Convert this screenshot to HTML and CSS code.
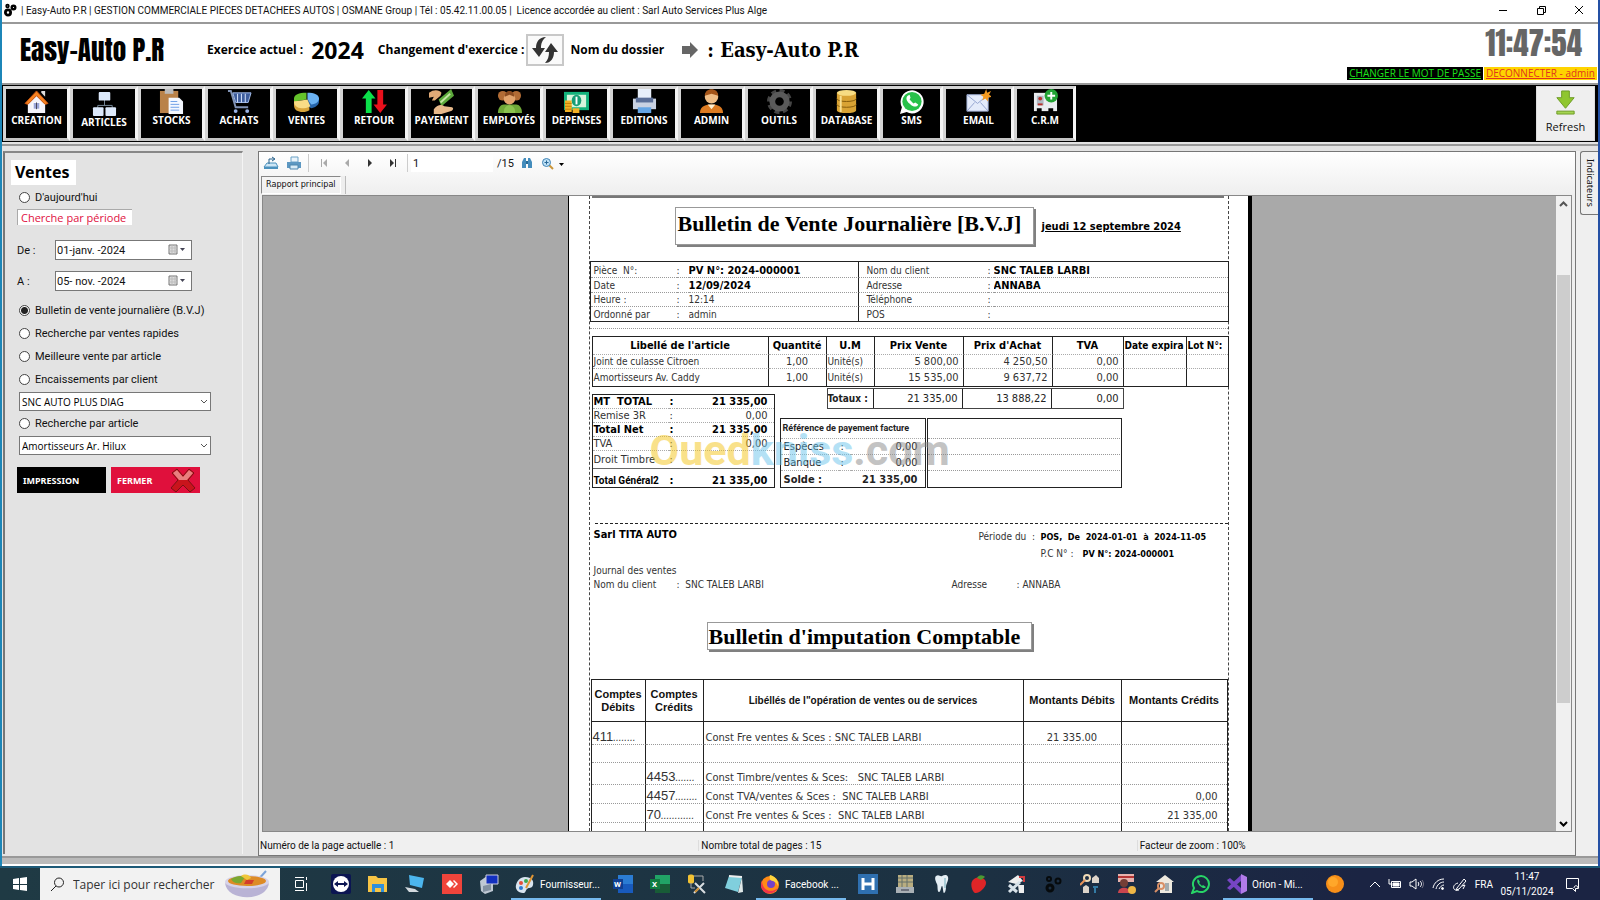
FILE: index.html
```html
<!DOCTYPE html>
<html lang="fr">
<head>
  <meta charset="UTF-8">
  <meta name="viewport" content="width=device-width, initial-scale=1.0">
  <title>Easy-Auto P.R</title>
  <link rel="stylesheet" href="styles.css">
</head>
<body>
  <div class="window">
    <!-- Title bar -->
    <div class="titlebar">
      <svg class="app-icon" viewBox="0 0 14 14" width="14" height="14" fill="none" stroke="#000">
        <circle cx="5" cy="9.500" r="2.600" stroke-width="2.800"/><circle cx="4.500" cy="3" r="1.300" stroke-width="1.800"/><circle cx="10.500" cy="4.500" r="1.800" stroke-width="2.400"/>
      </svg>
      <span class="title">| Easy-Auto P.R | GESTION COMMERCIALE PIECES DETACHEES AUTOS | OSMANE Group | Tél : 05.42.11.00.05 |&nbsp; Licence accordée au client : Sarl Auto Services Plus Alge</span>
      <div class="window-buttons">
        <button aria-label="Réduire"><svg width="10" height="10" stroke="#000"><path d="M1 5.500h8"/></svg></button>
        <button aria-label="Restaurer"><svg width="10" height="10" fill="none" stroke="#000"><path d="M1.500 3.500h6v6h-6zM3.500 3.500v-2h6v6h-2"/></svg></button>
        <button aria-label="Fermer la fenêtre"><svg width="10" height="10" stroke="#000"><path d="M1 1l8 8M9 1l-8 8"/></svg></button>
      </div>
    </div>

    <!-- Header -->
    <header class="header">
      <h1 class="brand">Easy-Auto P.R</h1>
      <span class="label">Exercice actuel :</span>
      <span class="year">2024</span>
      <span class="label">Changement d'exercice :</span>
      <button class="swap" aria-label="Changer d'exercice">
        <svg width="28" height="28" viewBox="0 0 28 28" fill="#333"><path d="M15 1C8 1 5 6 5 12H1l7 9 6-9h-4c0-4 1-8 5-11z"/><path d="M14 27c6 0 9-5 9-11h4l-7-9-6 9h4c0 4-1 8-4 11z"/></svg>
      </button>
      <span class="label">Nom du dossier</span>
      <svg class="arrow" width="18" height="18" viewBox="0 0 18 18" fill="#666"><path d="M1 5h8V1l8 8-8 8v-4H1z"/></svg>
      <span class="folder">: Easy-Auto P.R</span>
      <div class="session">
        <div class="clock">11:47:54</div>
        <div class="session-links"><a href="#" class="password">CHANGER LE MOT DE PASSE</a><a href="#" class="logout">DECONNECTER - admin</a></div>
      </div>
    </header>

    <!-- Main toolbar -->
    <nav class="toolbar">
      <button><svg viewBox="0 0 26 26"><path d="M4 13v12h18V13l-9-9z" fill="#f3f3fa"/><path d="M1 15L13 2l12 13-3 1-9-9-9 9z" fill="#f58220" stroke="#c4500c"/><path d="M18 2h4v6l-4-4z" fill="#ddd"/><path d="M9.500 14h7v7h-7z" fill="#9aa5d8" stroke="#fff"/><path d="M13 14v7" stroke="#445"/></svg>CREATION</button>
      <button class="low"><svg viewBox="0 0 26 26"><path d="M13 9v6M6 18v-3h15v3" fill="none" stroke="#789"/><rect x="7" y="1" width="12" height="9" rx="1" fill="#dce9fb"/><rect x="1" y="17" width="11" height="9" rx="1" fill="#dce9fb"/><rect x="14" y="17" width="11" height="9" rx="1" fill="#dce9fb"/></svg>ARTICLES</button>
      <button><svg viewBox="0 0 26 26"><path d="M1 2h19v23H1z" fill="#b98249"/><path d="M6 0h9v5H6z" fill="#bbb"/><path d="M10 9h11l4 4v13H10z" fill="#f4f8ff"/><path d="M12 13h7M12 16h9M12 19h9M12 22h9" stroke="#6d9fe6"/></svg>STOCKS</button>
      <button><svg viewBox="0 0 26 26" fill="none"><path d="M1 2h3l5 17h13" stroke="#8193b5" stroke-width="2"/><path d="M6 4h19l-3 10H9z" fill="#3e5d9c" stroke="#a5bfee"/><path d="M11 5v9M15 5v9M19 5v9" stroke="#dce8ff"/><circle cx="9" cy="23" r="2" fill="#9bb4e8"/><circle cx="21" cy="23" r="2" fill="#9bb4e8"/></svg>ACHATS</button>
      <button><svg viewBox="0 0 26 26"><path d="M0 12v5c0 5 4 7 9 7 3 0 5-1 7-2v-6z" fill="#d9a63c"/><path d="M14 13v5l4 2c5-1 8-4 8-7v-4z" fill="#2766ad"/><path d="M0 10c0-4 5-6 13-6v7L0 13z" fill="#65c32b"/><path d="M14 4c7 0 12 2 12 6 0 3-3 6-8 6l-4-5z" fill="#6bb2f2"/><path d="M0 13l14-2 3 7c-3 2-6 2-9 2-5 0-8-3-8-7z" fill="#f9dc86"/></svg>VENTES</button>
      <button><svg viewBox="0 0 26 26"><path d="M7 1L0 10h4v15h6V10h4z" fill="#0be04a"/><path d="M19 25l-7-9h4V1h6v15h4z" fill="#e8101c"/></svg>RETOUR</button>
      <button><svg viewBox="0 0 26 26"><path d="M10 11L23 0l3 7-13 11z" fill="#5da93c"/><path d="M12 14l10-9" stroke="#c5e5a5" stroke-width="2"/><path d="M0 4c5-4 11-3 13 0l-1 3-6 5H3l2-4-5 1z" fill="#e0aa77"/><path d="M5 21c4-5 8-5 11-3l8 1c2 1 1 3-1 4l-10 3H5z" fill="#e8b98b"/></svg>PAYEMENT</button>
      <button><svg viewBox="0 0 26 26"><path d="M1 25c0-6 3-9 6-9h13c3 0 6 3 6 9z" fill="#6fa838"/><circle cx="6" cy="7" r="5" fill="#b26c35"/><circle cx="20" cy="7" r="5" fill="#b26c35"/><circle cx="13" cy="10" r="6" fill="#e2a46d"/><path d="M8 8c0-8 10-8 10 0l-5-2z" fill="#8a4b20"/><path d="M7 25c0-6 3-8 6-8s6 2 6 8z" fill="#8bc34f"/></svg>EMPLOYÉS</button>
      <button><svg viewBox="0 0 26 26"><path d="M0 3h26v19H0z" fill="#12b27b"/><path d="M3 6h20v13H3z" fill="#d7f5dc"/><ellipse cx="13" cy="12" rx="5" ry="6" fill="#169e75"/><path d="M13 8v8" stroke="#fff" stroke-width="2"/><path d="M1 12h7v12H1zM9 20h7v5H9z" fill="#f3b226"/><path d="M1 15h7M1 18h7M1 21h7" stroke="#c27d08"/></svg>DEPENSES</button>
      <button><svg viewBox="0 0 26 26"><path d="M6 0h14v12H6z" fill="#e8effa"/><path d="M1 10h24v11H1z" fill="#c9d2e2"/><path d="M4 9h18v5H4z" fill="#5b6f98"/><path d="M6 19h14v6H6z" fill="#64a5e4"/></svg>EDITIONS</button>
      <button><svg viewBox="0 0 26 26"><path d="M1 25c0-8 7-9 12-9s12 1 12 9z" fill="#dc7b22"/><path d="M9 16l4 5 4-5z" fill="#fff0d0"/><circle cx="13" cy="8" r="7" fill="#f0bd85"/><path d="M6 7c0-9 14-9 14 0l-7-2z" fill="#a45418"/></svg>ADMIN</button>
      <button><svg viewBox="0 0 26 26"><circle cx="13" cy="13" r="11" fill="none" stroke="#454545" stroke-width="4" stroke-dasharray="5 3.600"/><circle cx="13" cy="13" r="7.500" fill="none" stroke="#5a5a5a" stroke-width="6"/></svg>OUTILS</button>
      <button><svg viewBox="0 0 26 26"><path d="M3 4v18c0 4 20 4 20 0V4z" fill="#d9a334"/><ellipse cx="13" cy="4" rx="10" ry="3" fill="#f7dc83"/><path d="M3 10c0 4 20 4 20 0M3 16c0 4 20 4 20 0" fill="none" stroke="#855c0a"/><path d="M7 7v17" stroke="#f8df92" stroke-width="2"/></svg>DATABASE</button>
      <button><svg viewBox="0 0 26 26"><path d="M1 26l2-7a12 12 0 1 1 5 5z" fill="#fff"/><circle cx="13.500" cy="13" r="10" fill="#28c14a"/><path d="M9 7c-3 3 0 7 3 9 3 3 7 3 8 0l-3-2-2 1-4-4 1-2-1-3z" fill="#fff"/></svg>SMS</button>
      <button><svg viewBox="0 0 26 26"><path d="M1 6h22v17H1z" fill="#e4ebfa" stroke="#a6b5dc"/><path d="M1 6l11 9L23 6M1 23l8-9M23 23l-8-9" fill="none" stroke="#93a3cf"/><path d="M21 0l1 4 4-2-2 4 3 2-4 1v4l-3-3-3 2 1-4-3-2 4-1z" fill="#f39a21"/></svg>EMAIL</button>
      <button><svg viewBox="0 0 26 26"><path d="M1 4h24v19H1z" fill="#e9edf0"/><path d="M4 7h7v10H4z" fill="#aeb9c2"/><circle cx="7.500" cy="10" r="2" fill="#b7322d"/><path d="M5 16h5" stroke="#b7322d" stroke-width="2"/><path d="M4 20h5v4H4zM16 20h5v4h-5z"/><circle cx="19" cy="7" r="7" fill="#22a334"/><path d="M19 3v8M15 7h8" stroke="#fff" stroke-width="2"/></svg>C.R.M</button>
      <button class="refresh"><svg viewBox="0 0 26 26"><path d="M9 1h8v7h5l-9 11L4 8h5z" fill="#8fc62f" stroke="#6d9b24"/><path d="M4 22h18v3H4z" fill="#a5d552" stroke="#6d9b24"/></svg>Refresh</button>
    </nav>

    <div class="workspace">
      <!-- Search criteria -->
      <aside class="criteria">
        <h2>Ventes</h2>
        <label class="choice today"><input type="radio" name="mode">D'aujourd'hui</label>
        <div class="period">Cherche par période</div>
        <div class="date-row">
          <label for="from">De :</label>
          <div class="date-box"><input id="from" type="text" value="01-janv. -2024"><svg width="18" height="12" viewBox="0 0 18 12"><path d="M1 1h8v9H1z" fill="#ddd" stroke="#777"/><path d="M1 4h8M1 7h8M4 1v9M7 1v9" stroke="#bbb"/><path d="M12 4h5l-2.500 3z" fill="#445"/></svg></div>
        </div>
        <div class="date-row">
          <label for="to">A :</label>
          <div class="date-box"><input id="to" type="text" value="05- nov. -2024"><svg width="18" height="12" viewBox="0 0 18 12"><path d="M1 1h8v9H1z" fill="#ddd" stroke="#777"/><path d="M1 4h8M1 7h8M4 1v9M7 1v9" stroke="#bbb"/><path d="M12 4h5l-2.500 3z" fill="#445"/></svg></div>
        </div>
        <div class="modes">
          <label class="choice"><input type="radio" name="mode" checked>Bulletin de vente journalière (B.V.J)</label>
          <label class="choice"><input type="radio" name="mode">Recherche par ventes rapides</label>
          <label class="choice"><input type="radio" name="mode">Meilleure vente par article</label>
          <label class="choice"><input type="radio" name="mode">Encaissements par client</label>
        </div>
        <div class="select-box">
          <select aria-label="Client"><option>SNC AUTO PLUS DIAG</option></select>
          <svg width="8" height="6" fill="none" stroke="#555"><path d="M1 1l3 3 3-3"/></svg>
        </div>
        <label class="choice by-article"><input type="radio" name="mode">Recherche par article</label>
        <div class="select-box">
          <select aria-label="Article"><option>Amortisseurs Ar. Hilux</option></select>
          <svg width="8" height="6" fill="none" stroke="#555"><path d="M1 1l3 3 3-3"/></svg>
        </div>
        <div class="actions">
          <button class="print">IMPRESSION</button>
          <button class="close">FERMER <svg width="26" height="25" viewBox="0 0 26 25"><path d="M2 5l5-4 6 7 6-7 5 4-6 7 7 8-5 4-7-7-7 7-5-4 7-8z" fill="#c9141c" stroke="#7c1014"/><path d="M3 5l4-3 6 7 6-7 4 3-6 7H9z" fill="#e87f7f"/></svg></button>
        </div>
      </aside>

      <!-- Report viewer -->
      <main class="viewer">
        <div class="viewer-bar">
          <button aria-label="Exporter"><svg width="16" height="14" viewBox="0 0 16 14"><path d="M4 7h9l2 4H1z" fill="#cde6f5" stroke="#4b91bd"/><path d="M1 12h14" stroke="#4b91bd" stroke-width="2"/><path d="M6 8V3h5M9 1l3 2-3 2" fill="none" stroke="#27618b"/></svg></button>
          <button aria-label="Imprimer"><svg width="16" height="14" viewBox="0 0 16 14"><path d="M5 1h7v5H5z" fill="#eaf4fb" stroke="#6aa2c7"/><path d="M1 6h14v6H1z" fill="#5d98c2"/><path d="M4 9h8v4H4z" fill="#d9ecf7" stroke="#4d86ae"/></svg></button>
          <i class="split"></i>
          <button aria-label="Première page"><svg width="10" height="10" fill="#aaa"><path d="M2 1h1v8H2zM8 1v8L4 5z"/></svg></button>
          <button aria-label="Page précédente"><svg width="10" height="10" fill="#aaa"><path d="M7 1v8L3 5z"/></svg></button>
          <button aria-label="Page suivante"><svg width="10" height="10" fill="#333"><path d="M3 1v8l4-4z"/></svg></button>
          <button aria-label="Dernière page"><svg width="10" height="10" fill="#333"><path d="M7 1h1v8H7zM2 1v8l4-4z"/></svg></button>
          <i class="split"></i>
          <input class="page-no" type="text" value="1" aria-label="Page">
          <span class="page-count">/15</span>
          <button aria-label="Rechercher"><svg width="12" height="12" viewBox="0 0 12 12"><path d="M1 5l2-4h2v10H1zM7 1h2l2 4v6H7z" fill="#438cbc"/><path d="M5 4h2v3H5z" fill="#276a96"/></svg></button>
          <button class="zoom" aria-label="Zoom"><svg width="24" height="13" viewBox="0 0 24 13"><path d="M8 8l4 4" stroke="#c99538" stroke-width="2"/><circle cx="5.500" cy="5.500" r="4" fill="#bfe1f6" stroke="#3f83b5"/><path d="M3.500 5.500h4M5.500 3.500v4" stroke="#286797"/><path d="M18 6h5l-2.500 3z"/></svg></button>
        </div>
        <div class="tabs"><button>Rapport principal</button></div>

        <div class="canvas">
          <div class="paper">
            <div class="frame">
              <div class="top-rule"></div>
              <div class="heading">
                <h2 class="boxed">Bulletin de Vente Journalière [B.V.J]</h2>
                <span class="date">jeudi 12 septembre 2024</span>
              </div>

              <table class="info">
                <colgroup><col class="c86"><col class="c12"><col class="c170"><col class="c129"><col class="c6"><col></colgroup>
                <tr><td>Pièce&nbsp; N°:</td><td>:</td><td class="b">PV N°: 2024-000001</td><td>Nom du client</td><td>:</td><td class="b">SNC TALEB LARBI</td></tr>
                <tr><td>Date</td><td>:</td><td class="b">12/09/2024</td><td>Adresse</td><td>:</td><td class="b">ANNABA</td></tr>
                <tr><td>Heure :</td><td>:</td><td>12:14</td><td>Téléphone</td><td>:</td><td></td></tr>
                <tr><td>Ordonné par</td><td>:</td><td>admin</td><td>POS</td><td>:</td><td></td></tr>
              </table>

              <div class="dots"></div>

              <table class="items">
                <colgroup><col class="c176"><col class="c58"><col class="c48"><col class="c89"><col class="c89"><col class="c71"><col class="c63"><col></colgroup>
                <thead><tr><th>Libellé de l'article</th><th>Quantité</th><th>U.M</th><th>Prix Vente</th><th>Prix d'Achat</th><th>TVA</th><th class="cut">Date expira</th><th class="cut">Lot N°:</th></tr></thead>
                <tbody>
                  <tr><td>Joint de culasse Citroen</td><td class="mid">1,00</td><td>Unité(s)</td><td class="num">5 800,00</td><td class="num">4 250,50</td><td class="num">0,00</td><td></td><td></td></tr>
                  <tr><td>Amortisseurs Av. Caddy</td><td class="mid">1,00</td><td>Unité(s)</td><td class="num">15 535,00</td><td class="num">9 637,72</td><td class="num">0,00</td><td></td><td></td></tr>
                </tbody>
              </table>

              <div class="summary">
                <table class="totals">
                  <tr class="b"><td>MT&nbsp; TOTAL</td><td>:</td><td class="num">21 335,00</td></tr>
                  <tr><td>Remise 3R</td><td>:</td><td class="num">0,00</td></tr>
                  <tr class="b"><td>Total Net</td><td>:</td><td class="num">21 335,00</td></tr>
                  <tr><td>TVA</td><td>:</td><td class="num">0,00</td></tr>
                  <tr class="tall"><td>Droit Timbre</td><td>:</td><td></td></tr>
                  <tr class="b last"><td>Total Général2</td><td>:</td><td class="num">21 335,00</td></tr>
                </table>
                <div class="summary-right">
                  <table class="sums">
                    <tr><th>Totaux :</th><td class="num">21 335,00</td><td class="num">13 888,22</td><td class="num">0,00</td></tr>
                  </table>
                  <div class="payments">
                    <table class="payment">
                      <colgroup><col class="c58"><col class="c12"><col></colgroup>
                      <tr><th colspan="3">Référence de payement facture</th></tr>
                      <tr><td>Espèces</td><td>:</td><td class="num">0,00</td></tr>
                      <tr><td>Banque</td><td>:</td><td class="num">0,00</td></tr>
                      <tr class="b"><td>Solde :</td><td></td><td class="num">21 335,00</td></tr>
                    </table>
                    <div class="notes"><div></div><div></div><div></div><div></div></div>
                  </div>
                </div>
                <div class="watermark"><span class="w1">Oued</span><span class="w2">kniss</span><span class="w3">.com</span></div>
              </div>

              <div class="cut-line"></div>

              <div class="journal">
                <div class="journal-left">
                  <p class="owner">Sarl TITA AUTO</p>
                  <p class="gap">Journal des ventes</p>
                  <p><span class="key">Nom du client</span>:&nbsp; SNC TALEB LARBI</p>
                </div>
                <div class="journal-right">
                  <p class="line"><span class="period-key">Période du&nbsp; :</span><b>POS,&nbsp; De&nbsp; 2024-01-01&nbsp; à&nbsp; 2024-11-05</b></p>
                  <p class="line"><span class="period-key"></span><span class="pc">P.C N° :</span><b>PV N°: 2024-000001</b></p>
                  <p class="address"><span class="address-key">Adresse</span>: ANNABA</p>
                </div>
              </div>

              <h2 class="boxed second">Bulletin d'imputation Comptable</h2>

              <table class="ledger">
                <colgroup><col class="c54"><col class="c58"><col class="c320"><col class="c98"><col></colgroup>
                <thead><tr><th>Comptes<br>Débits</th><th>Comptes<br>Crédits</th><th>Libéllés de l"opération de ventes ou de services</th><th>Montants Débits</th><th>Montants Crédits</th></tr></thead>
                <tbody>
                  <tr class="r23"><td class="acc">411<i>........</i></td><td></td><td>Const Fre ventes &amp; Sces : SNC TALEB LARBI</td><td class="mid">21 335.00</td><td></td></tr>
                  <tr class="r18"><td></td><td></td><td></td><td></td><td></td></tr>
                  <tr class="r22"><td></td><td class="acc">4453<i>.......</i></td><td>Const Timbre/ventes &amp; Sces:&nbsp;&nbsp; SNC TALEB LARBI</td><td></td><td></td></tr>
                  <tr class="r19"><td></td><td class="acc">4457<i>........</i></td><td>Const TVA/ventes &amp; Sces :&nbsp; SNC TALEB LARBI</td><td></td><td class="num">0,00</td></tr>
                  <tr class="r19"><td></td><td class="acc">70<i>............</i></td><td>Const Fre ventes &amp; Sces :&nbsp; SNC TALEB LARBI</td><td></td><td class="num">21 335,00</td></tr>
                  <tr class="r23"><td></td><td></td><td></td><td></td><td></td></tr>
                </tbody>
              </table>
            </div>
          </div>
          <div class="scrollbar">
            <svg width="9" height="6" fill="none" stroke="#555" stroke-width="2"><path d="M1 5l3.500-3.500L8 5"/></svg>
            <div class="thumb"></div>
            <svg width="9" height="6" fill="none" stroke="#000" stroke-width="2"><path d="M1 1l3.500 3.500L8 1"/></svg>
          </div>
        </div>

        <div class="status">
          <span>Numéro de la page actuelle : 1</span>
          <span>Nombre total de pages : 15</span>
          <span>Facteur de zoom : 100%</span>
        </div>
      </main>

      <div class="side-tabs"><button>Indicateurs</button></div>
    </div>
    <div class="bottom-band"></div>
  </div>

  <!-- Windows taskbar -->
  <footer class="taskbar">
    <button class="start" aria-label="Démarrer"><svg width="14" height="14" fill="#fff"><path d="M0 2l6-1v6H0zM7 1l7-1v7H7zM0 8h6v5l-6-1zM7 8h7v6l-7-1z"/></svg></button>
    <label class="search">
      <svg width="15" height="15" viewBox="0 0 15 15" fill="none" stroke="#222"><circle cx="9" cy="5.500" r="4.500"/><path d="M6 9l-5 5"/></svg>
      <input type="text" placeholder="Taper ici pour rechercher" aria-label="Rechercher">
      <svg width="46" height="28" viewBox="0 0 46 28"><path d="M32 12L42 1" stroke="#7ba3d8" stroke-width="2"/><ellipse cx="23" cy="12" rx="22" ry="7" fill="#d7d3e8"/><ellipse cx="23" cy="11" rx="19" ry="5" fill="#dd8b26"/><path d="M7 9c5-3 10-4 14-2l-4 6c-4 1-8 0-10-4z" fill="#7aa832"/><path d="M17 6c4-3 9-1 10 2l-4 2z" fill="#f0c63a"/><path d="M22 10h8l-2 4h-8z" fill="#d33d2c"/><path d="M1 13c2 19 42 19 44 0-6 7-38 7-44 0z" fill="#b9b3d5"/></svg>
    </label>
    <button class="task view" aria-label="Vue des tâches"><svg width="16" height="16" fill="none" stroke="#fff"><path d="M2.500 4.500h8v7h-8zM2 1.500h9M2 14.500h9M13.500 1v3M13.500 7v8"/></svg></button>
    <button class="task" aria-label="TeamViewer"><svg width="20" height="20"><rect width="20" height="20" rx="2" fill="#0b1552"/><circle cx="10" cy="10" r="8" fill="#fff"/><path d="M3 10l4-3v2h6V7l4 3-4 3v-2H7v2z" fill="#0b1552"/></svg></button>
    <button class="task" aria-label="Explorateur"><svg width="20" height="18"><path d="M0 1h8l2 2h9v14H0z" fill="#f6c445"/><path d="M4 9h12v8h-3v-4H7v4H4z" fill="#2f8fdd"/></svg></button>
    <button class="task" aria-label="Ce PC"><svg width="20" height="18"><path d="M4 0l15 3-2 10-12-3z" fill="#4cb6ee"/><path d="M0 12l10 2 4 3H4z" fill="#d3d9de"/></svg></button>
    <button class="task" aria-label="AnyDesk"><svg width="20" height="20"><path d="M0 0h20v20H0z" fill="#ef443b"/><path d="M8 6l4 4-4 4-4-4zM12 6l4 4-4 4-1-1 3-3-3-3z" fill="#fff"/></svg></button>
    <button class="task" aria-label="Bureau distant"><svg width="20" height="20"><path d="M1 7l7-5 6 2v13l-8 3-4-3z" fill="#bfc8d3"/><path d="M7 1h12v9H7z" fill="#1230bf" stroke="#ccd"/><path d="M4 12l8-2v6l-8 2z" fill="#8290a0"/></svg></button>
    <button class="task wide active"><svg width="20" height="20"><path d="M10 3c7 0 9 4 8 8s-4 2-6 4-1 4-4 4c-5 0-8-4-7-8s4-8 9-8z" fill="#d8e4ef"/><circle cx="6" cy="9" r="2" fill="#e34e3b"/><circle cx="11" cy="7" r="2" fill="#3ca84e"/><circle cx="6" cy="14" r="2" fill="#307bd1"/><path d="M11 14L18 1" stroke="#df9635" stroke-width="2"/></svg>Fournisseur...</button>
    <button class="task" aria-label="Word"><svg width="20" height="18"><path d="M5 0h15v18H5z" fill="#2b7cd3"/><path d="M5 9h15v9H5z" fill="#185abd"/><path d="M0 4h10v10H0z" fill="#103f91"/><text x="1" y="12" font-size="8" font-weight="700" fill="#fff">W</text></svg></button>
    <button class="task" aria-label="Excel"><svg width="20" height="18"><path d="M5 0h15v18H5z" fill="#21a366"/><path d="M5 9h15v9H5z" fill="#185c37"/><path d="M0 4h10v10H0z" fill="#107c41"/><text x="2" y="12" font-size="8" font-weight="700" fill="#fff">X</text></svg></button>
    <button class="task" aria-label="SQL Server"><svg width="20" height="20" fill="none"><path d="M1 2c0-2 6-2 6 0v6c0 2-6 2-6 0z" fill="#f2c233"/><path d="M7 2h9v5M4 9v5h4" stroke="#aaa"/><path d="M8 9l10 10M17 9L7 19" stroke="#d8dde0" stroke-width="2"/><path d="M8 18l4-4" stroke="#c88b32" stroke-width="2"/></svg></button>
    <button class="task" aria-label="Bloc-notes"><svg width="20" height="20"><path d="M5 2l13 1-4 15-13-4z" fill="#80cfdd"/><path d="M18 3l1 15-5 1z" fill="#dfe8e8"/><path d="M5 2l13 1" stroke="#eee" stroke-width="2"/></svg></button>
    <button class="task wide active"><svg width="20" height="20"><circle cx="10" cy="11" r="9" fill="#ff8a16"/><path d="M2 6c0 10 8 14 16 8-5 9-17 6-17-3z" fill="#f2354a"/><circle cx="11" cy="10" r="4" fill="#7542c8"/><path d="M10 1c5 1 9 6 8 11-1-3-3-4-5-5-3 0-4-3-3-6z" fill="#ffd53d"/></svg>Facebook ...</button>
    <button class="task" aria-label="HFSQL"><svg width="20" height="20"><path d="M0 0h20v20H0z" fill="#2f70b0"/><path d="M5 4v12M15 4v12M5 10h10" stroke="#fff" stroke-width="3"/></svg></button>
    <button class="task" aria-label="Caisse"><svg width="20" height="20"><path d="M3 1h15v12H3z" fill="#b9ad80"/><path d="M3 4h15M3 8h15M7 1v12M12 1v12" stroke="#65706b"/><path d="M1 13h18v6H1z" fill="#a9b0b5"/><path d="M6 16h8" stroke="#334"/></svg></button>
    <button class="task" aria-label="Dentiste"><svg width="16" height="20"><path d="M2 2c3-2 4 1 6 0s5-2 6 1-2 7-2 10-1 6-2 6-1-7-2-7-1 6-3 6-1-6-2-8-3-6-1-8z" fill="#e4eef4"/><path d="M11 4v10" stroke="#72aebc"/></svg></button>
    <button class="task" aria-label="Fraise"><svg width="20" height="20"><path d="M5 5c5-3 12-1 12 4S9 20 6 19 0 8 5 5z" fill="#df2527"/><path d="M8 4c2-4 6-3 8-1l-4 3z" fill="#4a9932"/></svg></button>
    <button class="task" aria-label="Services"><svg width="20" height="20" fill="none"><path d="M2 8l10-7 5 6-7 3zM12 11h6v8h-5z" fill="#eee"/><path d="M3 18L14 8M3 11l8 7" stroke="#d7e1e8" stroke-width="3"/><path d="M13 3h5v5" stroke="#d33b3e" stroke-width="2"/></svg></button>
    <button class="task" aria-label="Easy-Auto"><svg width="18" height="18" fill="none" stroke="#060a0c"><circle cx="6" cy="13" r="3" stroke-width="3"/><circle cx="5" cy="4" r="2" stroke-width="2"/><circle cx="14" cy="6" r="2.500" stroke-width="2"/></svg></button>
    <button class="task" aria-label="Location"><svg width="20" height="20" fill="none"><circle cx="7" cy="4" r="3" stroke="#f0dab5" stroke-width="2"/><path d="M5 6l-5 5" stroke="#e79359" stroke-width="2"/><path d="M12 4l4-3 3 3v5h-7zM3 13l3-2 3 2v6H3z" fill="#ddd4ca"/><path d="M13 13h5M15 13v6" stroke="#347ba5" stroke-width="2"/></svg></button>
    <button class="task" aria-label="Notaire"><svg width="20" height="20"><path d="M1 0h16v8H1z" fill="#e7b2ad"/><path d="M1 3h16" stroke="#b53535" stroke-width="2"/><circle cx="7" cy="9" r="4" fill="#743e35"/><path d="M1 19c0-7 12-7 12 0z" fill="#c9454e"/><circle cx="15" cy="16" r="4" fill="#efb646"/></svg></button>
    <button class="task" aria-label="Immobilier"><svg width="20" height="20" fill="none"><path d="M2 8l9-7 9 7h-2v11H6V8z" fill="#eee9df"/><path d="M11 9h4v8h-4z" fill="#a3acaf"/><circle cx="7" cy="12" r="3" stroke="#d88f66" stroke-width="2"/><path d="M5 14l-4 4" stroke="#d88f66" stroke-width="2"/></svg></button>
    <button class="task" aria-label="WhatsApp"><svg width="20" height="20" fill="none"><path d="M1 19l2-5a8 8 0 1 1 3 3z" stroke="#28d567" stroke-width="2"/><path d="M7 5c-2 2 0 5 2 7 2 2 5 3 6 1l-3-2-1 1-3-3 1-1z" fill="#28d567"/></svg></button>
    <button class="task wide active"><svg width="20" height="20"><path d="M14 0l6 3v14l-6 3z" fill="#b17be8"/><path d="M14 0v20L0 6l3-2 11 10zM0 14L14 1v6L3 16z" fill="#7745c4"/></svg>Orion - Mi...</button>
    <button class="task" aria-label="Météo"><svg width="18" height="18"><circle cx="9" cy="9" r="9" fill="#f78f19"/><circle cx="7" cy="7" r="5" fill="#ffa72a"/></svg></button>
    <div class="tray">
      <svg width="12" height="8" fill="none" stroke="#fff"><path d="M1 7l5-5 5 5"/></svg>
      <svg width="14" height="12" fill="none" stroke="#fff"><path d="M3.500 3.500h9v6h-9z"/><path d="M5 5h6v3H5z" fill="#fff"/><path d="M1 1v5h3"/></svg>
      <svg width="16" height="12" fill="none" stroke="#fff"><path d="M1 4h2l4-3v10L3 8H1zM9 4c1 1 1 3 0 4M11 3c2 2 2 4 0 6"/><path d="M13 2c2 3 2 5 0 8" stroke="#778"/></svg>
      <svg width="14" height="14" fill="none" stroke="#fff"><path d="M1 11C2 6 6 2 12 2M4 12c1-4 4-7 8-7M7 12c1-2 3-4 5-4"/><circle cx="10.500" cy="11.500" r="1" fill="#fff"/></svg>
      <svg width="15" height="15" fill="none" stroke="#fff"><path d="M4 11l7-9 2 2-7 8-3 1zM5 6C-2 8 0 15 6 13M9 9l3-1-2 4"/></svg>
      <span class="lang">FRA</span>
      <div class="datetime">11:47<br>05/11/2024</div>
      <svg width="15" height="15" fill="none" stroke="#fff"><path d="M1.500 1.500h12v10h-3v3l-3-3h-6z"/><path d="M9 11c0-3 4-3 4 0"/></svg>
    </div>
  </footer>
</body>
</html>
```
FILE: styles.css
```css
* {
  box-sizing: border-box;
}
body {
  margin: 0;
  height: 100vh;
  display: flex;
  flex-direction: column;
  overflow: hidden;
  font-family: "Noto Sans", "Open Sans", sans-serif;
  font-size: 12px;
  color: #111;
}
button, input, select {
  font: inherit;
  color: inherit;
  margin: 0;
}
button {
  border: none;
  background: none;
  padding: 0;
  cursor: pointer;
}
h1, h2, p {
  margin: 0;
}
svg {
  display: block;
  flex: none;
}
table {
  border-spacing: 0;
  table-layout: fixed;
}
.b, b {
  font-weight: bold;
  color: #000;
}

/* Window */
.window {
  flex: 1;
  min-height: 0;
  display: flex;
  flex-direction: column;
  border-left: 2px solid #1c86b8;
  border-right: 2px solid #2450a4;
  background: #e3e3e3;
}
.titlebar {
  height: 22px;
  flex: none;
  display: flex;
  align-items: center;
  gap: 4px;
  padding: 0 0 2px 1px;
  background: #fff;
  font-family: Roboto, sans-serif;
  font-size: 10px;
}
.window-buttons {
  display: flex;
  gap: 28px;
  margin-left: auto;
  padding-right: 14px;
}

/* Header */
.header {
  height: 63px;
  flex: none;
  display: flex;
  align-items: center;
  padding: 0 1px 8px 18px;
  background: #fff;
  border-top: 2px solid #999;
  border-bottom: 2px solid #999;
  font-weight: bold;
  color: #000;
}
.brand {
  width: 187px;
  font-family: Impact, Anton, "Roboto Condensed", Roboto, sans-serif;
  font-weight: normal;
  font-size: 27px;
  line-height: 36px;
}
.label {
  font-family: "Open Sans", sans-serif;
  font-size: 12px;
  white-space: nowrap;
}
.year {
  margin: 0 14px 0 8px;
  font-size: 23px;
}
.swap {
  width: 38px;
  height: 32px;
  display: flex;
  align-items: center;
  justify-content: center;
  margin: 0 6px 0 2px;
  border: 2px solid #c8c8c8;
  background: #fafafa;
}
.arrow {
  margin: 0 8px 0 17px;
}
.folder {
  font-family: "DejaVu Serif Condensed", "DejaVu Serif", serif;
  font-size: 20px;
  white-space: nowrap;
}
.session {
  align-self: stretch;
  margin: 0 0 -5px auto;
  display: flex;
  flex-direction: column;
  justify-content: space-between;
  align-items: flex-end;
}
.clock {
  margin-right: 15px;
  font-family: Impact, Anton, "Roboto Condensed", Roboto, sans-serif;
  font-weight: normal;
  font-size: 31px;
  line-height: 38px;
  color: #666;
}
.session-links {
  display: flex;
  gap: 1px;
  font-weight: normal;
  font-family: "Open Sans", sans-serif;
  font-size: 10px;
  line-height: 13px;
}
.session-links a {
  padding: 0 2px;
  white-space: nowrap;
}
.password {
  background: #000;
  color: #1be01b;
}
.logout {
  background: #ffd400;
  color: #e0341c;
}

/* Toolbar */
.toolbar {
  height: 57px;
  flex: none;
  display: grid;
  grid-template-columns: repeat(6, 67px 68px) 67px 63px 71px 62px 1fr;
  padding-left: 1px;
  background: #000;
}
.toolbar button {
  display: flex;
  flex-direction: column;
  align-items: center;
  justify-content: flex-start;
  margin: 1px 0;
  border: 3px solid #d4d4d4;
  border-right-color: #f4f4f4;
  border-bottom-color: #c4c4c4;
  background: #000;
  color: #fff;
  font-family: "Open Sans", sans-serif;
  font-weight: bold;
  font-size: 10px;
  line-height: 13px;
}
.toolbar svg {
  width: 25px;
  height: 25px;
}
.toolbar .low {
  padding-top: 2px;
}
.toolbar .refresh {
  justify-self: end;
  width: 59px;
  margin: 1px 3px 1px 0;
  padding-top: 3px;
  border: 1px solid #ddd;
  background: #efefef;
  color: #111;
  font-weight: normal;
  font-size: 11px;
}
.toolbar .refresh svg {
  margin-bottom: 5px;
}

/* Workspace */
.workspace {
  flex: 1;
  min-height: 0;
  display: flex;
  margin-top: 2px;
  padding-top: 5px;
  border-top: 2px solid #999;
  border-bottom: 2px solid #999;
}
.criteria {
  width: 240px;
  flex: none;
  margin: 0 15px 2px 1px;
  padding: 7px 0 0 12px;
  border-left: 2px solid #777;
  border-top: 2px solid #888;
  border-right: 1px solid #f4f4f4;
}
.criteria h2 {
  width: 65px;
  margin-left: -6px;
  padding-left: 4px;
  background: #fff;
  font-size: 16px;
  line-height: 25px;
  color: #000;
}
.choice {
  display: flex;
  align-items: center;
  height: 23px;
  padding-left: 2px;
  font-family: Roboto, sans-serif;
  font-size: 11px;
  white-space: nowrap;
}
.today {
  margin-top: 1px;
}
.by-article {
  margin-top: 1px;
}
.choice input {
  appearance: none;
  width: 11px;
  height: 11px;
  margin-right: 5px;
  border: 1px solid #444;
  border-radius: 50%;
  background: #fff;
}
.choice input:checked {
  background: radial-gradient(#222 0 3px, #fff 4px);
}
.period {
  width: 115px;
  padding-left: 3px;
  background: #fff;
  border-top: 1px solid #aaa;
  border-left: 1px solid #aaa;
  color: #e01040;
  font-family: "Open Sans", sans-serif;
  font-size: 11px;
  line-height: 15px;
  white-space: nowrap;
}
.date-row {
  display: flex;
  align-items: center;
  margin-top: 11px;
  font-family: Roboto, sans-serif;
  font-size: 11px;
}
.period + .date-row {
  margin-top: 15px;
}
.date-row label {
  width: 38px;
}
.date-box {
  width: 137px;
  height: 20px;
  display: flex;
  align-items: center;
  background: #fff;
  border: 1px solid #777;
}
.date-box input {
  width: 112px;
  padding: 0 1px;
  border: none;
  background: none;
}
.modes {
  margin-top: 8px;
}
.select-box {
  position: relative;
  width: 192px;
  margin: 1px 0 0 2px;
}
.select-box select {
  display: block;
  width: 100%;
  height: 19px;
  padding: 0 2px;
  appearance: none;
  border: 1px solid #777;
  border-radius: 0;
  background: #fff;
  color: #000;
  font-family: "Open Sans", sans-serif;
  font-size: 10px;
}
.select-box svg {
  position: absolute;
  right: 3px;
  top: 7px;
}
.actions {
  display: flex;
  gap: 5px;
  margin-top: 12px;
}
.actions button {
  display: flex;
  align-items: center;
  justify-content: space-between;
  width: 89px;
  height: 26px;
  padding: 0 4px 0 6px;
  color: #fff;
  font-size: 9px;
  font-weight: bold;
}
.print {
  background: #000;
}
.close {
  background: #e0103c;
}

/* Report viewer */
.viewer {
  flex: 1;
  min-width: 0;
  display: flex;
  flex-direction: column;
  border: 1px solid #777;
  background: linear-gradient(#fff, #eee 44px);
}
.viewer-bar {
  height: 22px;
  flex: none;
  display: flex;
  align-items: center;
  font-family: Roboto, sans-serif;
  font-size: 11px;
}
.viewer-bar button {
  width: 23px;
  display: flex;
  justify-content: center;
}
.split {
  width: 1px;
  height: 18px;
  margin: 0 3px;
  background: #ccc;
}
.page-no {
  width: 82px;
  height: 17px;
  padding: 0 2px;
  border: none;
  background: #fff;
}
.page-count {
  margin-left: 4px;
}
.viewer-bar .page-count + button {
  margin-left: 2px;
}
.viewer-bar .zoom {
  width: 28px;
}
.tabs {
  height: 21px;
  flex: none;
  padding-left: 2px;
}
.tabs button {
  height: 18px;
  padding: 0 4px;
  border: 1px solid #fff;
  border-top-color: #888;
  border-left-color: #888;
  box-shadow: 4px 0 0 #eee, 5px 0 0 #bbb;
  font-family: "DejaVu Sans Condensed", sans-serif;
  font-size: 9px;
  line-height: 15px;
}
.canvas {
  flex: 1;
  min-height: 0;
  display: flex;
  align-items: flex-start;
  overflow: hidden;
  margin: 0 3px;
  border: 1px solid #888;
  background: #a9a9a9;
}
.scrollbar {
  align-self: stretch;
  width: 15px;
  display: flex;
  flex-direction: column;
  align-items: center;
  padding: 5px 0 4px;
  background: #f0f0f0;
}
.thumb {
  width: 13px;
  height: 428px;
  margin: 68px 0 auto;
  background: #cdcdcd;
}
.status {
  height: 23px;
  flex: none;
  display: grid;
  grid-template-columns: 1fr 1fr 1fr;
  align-items: center;
  padding: 3px 0 0 1px;
  background: #f0f0f0;
  font-family: Roboto, sans-serif;
  font-size: 10px;
}
.status span + span {
  border-left: 1px solid #ddd;
  padding-left: 2px;
}
.side-tabs {
  width: 22px;
  flex: none;
  padding: 0 0 0 4px;
  background: #efefef;
}
.side-tabs button {
  width: 18px;
  height: 64px;
  border: 1px solid #777;
  border-right: none;
  border-radius: 3px 0 0 3px;
  writing-mode: vertical-rl;
  font-size: 9px;
  line-height: 16px;
}
.bottom-band {
  height: 8px;
  flex: none;
  background: #bbb;
  border-bottom: 2px solid #fff;
}

/* Report page */
.paper {
  width: 684px;
  flex: none;
  margin: 0 auto;
  padding-left: 20px;
  background: #fff;
  border-left: 1px solid #000;
  border-right: 4px solid #000;
  font-family: "DejaVu Sans Condensed", "Noto Sans", sans-serif;
  font-size: 11px;
  line-height: 13px;
  color: #333;
}
.frame {
  width: 640px;
  border-left: 1px dashed #444;
  border-right: 1px dashed #444;
}
.top-rule {
  height: 2px;
  margin: 0 4px 0 2px;
  background: #777;
}
.heading {
  display: flex;
  align-items: center;
  gap: 8px;
  margin: 9px 0 0 85px;
}
.boxed {
  width: 359px;
  height: 38px;
  padding: 0 2px;
  border: 1px solid #999;
  box-shadow: 2px 2px 0 #808080;
  font-family: "Liberation Serif", serif;
  font-size: 22px;
  line-height: 32px;
  color: #000;
  white-space: nowrap;
}
.second {
  width: 325px;
  height: 28px;
  margin: 30px 0 0 117px;
  padding: 0 1px;
  line-height: 27px;
}
.date {
  font-weight: bold;
  text-decoration: underline;
  color: #000;
  white-space: nowrap;
}
.num {
  text-align: right;
}
.mid {
  text-align: center;
}
td, th {
  padding: 0;
  white-space: nowrap;
  overflow: hidden;
}
.c6 { width: 6px; }
.c12 { width: 12px; }
.c48 { width: 48px; }
.c54 { width: 54px; }
.c58 { width: 58px; }
.c63 { width: 63px; }
.c71 { width: 71px; }
.c86 { width: 86px; }
.c89 { width: 89px; }
.c98 { width: 98px; }
.c129 { width: 129px; }
.c170 { width: 170px; }
.c176 { width: 176px; }
.c320 { width: 320px; }
.info {
  width: 639px;
  margin-top: 16px;
  border: 1px solid #222;
}
.info td {
  height: 15px;
  border-bottom: 1px dotted #999;
  font-size: 10px;
}
.info .b {
  font-size: 11px;
}
.info tr:first-child td {
  height: 16px;
  vertical-align: bottom;
}
.info tr:nth-child(3) td, .info tr:last-child td {
  height: 14px;
}
.info tr:last-child td {
  border-bottom: none;
}
.info td:first-child {
  padding-left: 3px;
}
.info td:nth-child(3) {
  border-right: 1px solid #222;
}
.info td:nth-child(4) {
  padding-left: 8px;
}
.dots {
  margin-top: 6px;
  border-top: 1px dotted #999;
}
.items {
  width: 637px;
  margin: 7px 0 0 2px;
  border: 1px solid #222;
}
.items th, .items td {
  height: 14px;
  padding: 0 1px;
  border-right: 1px solid #222;
  border-bottom: 1px dotted #aaa;
}
.items th {
  height: 18px;
  color: #000;
}
.items td:first-child, .items td:nth-child(3) {
  font-size: 10px;
}
.items tbody tr:last-child td {
  height: 17px;
  border-bottom: none;
}
.items th:last-child, .items td:last-child {
  border-right: none;
}
.items .cut {
  font-size: 10px;
  text-align: left;
}
.items .num {
  padding-right: 4px;
}
.summary {
  position: relative;
  display: flex;
  height: 101px;
  margin-left: 2px;
}
.totals {
  width: 183px;
  height: 94px;
  margin-top: 7px;
  border: 1px solid #222;
}
.totals td {
  height: 14px;
  border-bottom: 1px dotted #aaa;
  padding: 0 1px;
  vertical-align: bottom;
}
.totals td:nth-child(2) {
  width: 8px;
}
.totals td:first-child {
  width: 76px;
}
.totals .num {
  padding-right: 6px;
}
.totals .tall td {
  height: 18px;
  border-bottom: 1px solid #666;
  vertical-align: middle;
}
.totals .last td {
  height: 18px;
  border-bottom: none;
}
.totals .last td:first-child {
  font-family: Roboto, sans-serif;
  font-size: 10px;
}
.summary-right {
  margin-left: 5px;
}
.sums {
  width: 297px;
  height: 21px;
  margin: 1px 0 9px 47px;
  border: 1px solid #444;
}
.sums th, .sums td {
  width: 89px;
  border-right: 1px solid #222;
  color: #222;
}
.sums th {
  width: 46px;
  font-size: 10px;
  text-align: left;
}
.sums td:last-child {
  width: auto;
  border-right: none;
}
.sums .num {
  padding-right: 4px;
}
.payments {
  display: flex;
  gap: 1px;
}
.payment {
  width: 146px;
  height: 70px;
  border: 1px solid #222;
}
.payment th, .payment td {
  height: 16px;
  padding: 0 3px;
  border-bottom: 1px dotted #aaa;
  color: #222;
}
.payment th {
  height: 20px;
  padding: 0 2px;
  font-family: Roboto, sans-serif;
  font-size: 9px;
  text-align: left;
}
.payment td:nth-child(2) {
  padding: 0 2px;
}
.payment .num {
  padding-right: 7px;
}
.payment tr:last-child td {
  border-bottom: none;
}
.notes {
  width: 195px;
  border: 1px solid #222;
  padding-right: 1px;
}
.notes div {
  height: 16px;
  border-bottom: 1px dotted #999;
}
.notes div:first-child {
  height: 20px;
}
.notes div:last-child {
  border-bottom: none;
}
.watermark {
  position: absolute;
  left: 58px;
  top: 36px;
  font-family: Roboto, sans-serif;
  font-weight: bold;
  font-size: 43px;
  line-height: 54px;
  opacity: 0.5;
}
.w1 { color: #f5c518; }
.w2 { color: #6cc4ec; }
.w3 { color: #888; }
.cut-line {
  margin: 35px 0 0 5px;
  border-top: 1px dashed #222;
}
.journal {
  display: flex;
  margin-top: 4px;
  padding-left: 4px;
  font-size: 10px;
}
.journal-left {
  width: 358px;
}
.journal p {
  line-height: 14px;
  white-space: nowrap;
}
.journal .owner {
  font-size: 11px;
  font-weight: bold;
  color: #000;
}
.journal .gap {
  margin-top: 22px;
}
.key {
  display: inline-block;
  width: 83px;
}
.journal .line {
  display: flex;
  height: 17px;
  align-items: center;
}
.journal-right b {
  font-size: 9px;
}
.period-key {
  width: 89px;
  padding-left: 27px;
}
.pc {
  width: 42px;
}
.journal .address {
  margin-top: 16px;
}
.address-key {
  display: inline-block;
  width: 65px;
}
.ledger {
  width: 637px;
  margin: 29px 0 0 1px;
  border: 1px solid #222;
  border-bottom: none;
}
.ledger th, .ledger td {
  padding: 0 2px;
  border-right: 1px solid #222;
}
.ledger th:last-child, .ledger td:last-child {
  border-right: none;
}
.ledger th {
  height: 42px;
  border-bottom: 1px solid #222;
  font-family: "Liberation Sans", sans-serif;
  font-size: 11px;
  color: #111;
}
.ledger th:nth-child(3) {
  font-size: 10px;
}
.ledger td {
  border-bottom: 1px dotted #999;
  vertical-align: bottom;
}
.ledger .num {
  padding-right: 9px;
}
.ledger .acc {
  padding-left: 1px;
  font-family: "Liberation Sans", sans-serif;
  font-size: 13px;
}
.acc i {
  font-size: 10px;
}
.r23 td { height: 23px; }
.r18 td { height: 18px; }
.r22 td { height: 22px; }
.r19 td { height: 19px; }

/* Taskbar */
.taskbar {
  height: 34px;
  flex: none;
  display: flex;
  align-items: stretch;
  border-top: 2px solid #1d5a78;
  background: linear-gradient(90deg, #1f3a44, #1c3142 60%, #1b2443 85%);
  color: #fff;
  font-family: Roboto, sans-serif;
  font-size: 10px;
}
.taskbar button {
  flex: none;
  display: flex;
  align-items: center;
  justify-content: center;
}
.start {
  width: 40px;
}
.search {
  width: 240px;
  flex: none;
  display: flex;
  align-items: center;
  padding: 0 10px;
  background: #f2f2f2;
  font-family: "Open Sans", sans-serif;
  font-size: 12px;
}
.search input {
  flex: 1;
  min-width: 0;
  padding: 0 0 0 8px;
  border: none;
  background: none;
}
.search input::placeholder {
  color: #333;
}
.task {
  width: 37px;
}
.task.view {
  width: 42px;
}
.taskbar .wide {
  width: 90px;
  margin: 0 3px 0 4px;
  justify-content: flex-start;
  gap: 5px;
  padding: 2px 0 0 4px;
  border-bottom: 2px solid #76b9ed;
  white-space: nowrap;
}
.tray {
  margin-left: auto;
  padding-right: 20px;
  display: flex;
  align-items: center;
  gap: 7px;
}
.datetime {
  width: 54px;
  margin-right: 4px;
  line-height: 15px;
  text-align: center;
}
```
